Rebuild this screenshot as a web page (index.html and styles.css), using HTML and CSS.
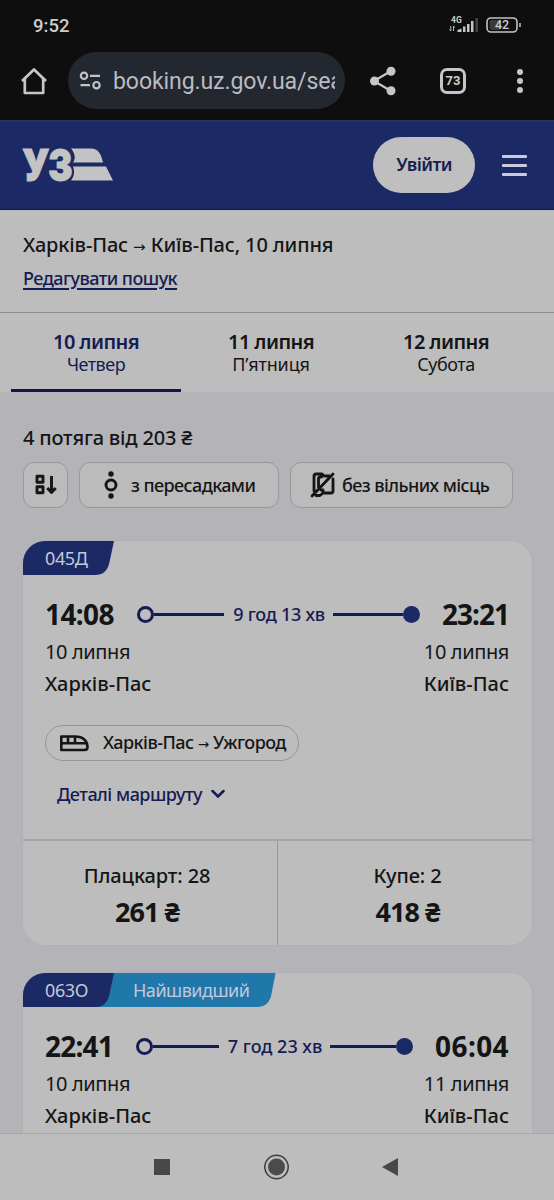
FILE: index.html
```
<!DOCTYPE html>
<html lang="uk">
<head>
<meta charset="utf-8">
<title>Квитки</title>
<link rel="stylesheet" href="styles.css">
</head>
<body>
<div class="phone">
  <div class="status">
    <span class="clock">9:52</span>
    <svg class="signal" width="31" height="20" viewBox="0 0 31 20">
      <text x="2" y="8" class="net">4G</text>
      <path d="M1.800 11v5M.5 14.500l1.300 1.500M4.500 16v-5l1.300 1.500" stroke="#bbb" fill="none"/>
      <path d="M8.500 17v-2l4-1.500v3.500zM14 17v-5.500h2.500v5.500zM18 17v-8h2.500v8zM22 17V6h2.500v11z" fill="#c4c4c4"/>
      <path d="M26.500 3h2.500v14h-2.500z" fill="#444"/>
    </svg>
    <svg class="battery" width="36" height="17" viewBox="0 0 36 17">
      <rect x="1" y="1" width="30" height="14" rx="4" fill="none" stroke="#c4c4c4" stroke-width="1.600"/>
      <rect x="3.500" y="3" width="11" height="10" rx="2" fill="#3a3a3a"/>
      <path d="M34 6v4" stroke="#c4c4c4" stroke-width="1.500"/>
      <text x="16" y="12.400" text-anchor="middle" class="level">42</text>
    </svg>
  </div>
  <div class="browser">
    <svg class="home" width="28" height="28" viewBox="0 0 28 28" fill="none" stroke="#c6c6c6" stroke-width="2.700" stroke-linejoin="round"><path d="M2 14L14 2.500 26 14M4.800 12v14h18.400V12"/></svg>
    <div class="address">
      <svg width="24" height="20" viewBox="0 0 24 20" fill="none" stroke="#c0c3c7" stroke-width="2.200"><circle cx="5" cy="4.800" r="3.200"/><circle cx="17.500" cy="14.200" r="3.200"/><path d="M11 4.800h10M1.500 14.200h9.500"/></svg>
      <span class="url">booking.uz.gov.ua/sea</span>
    </div>
    <svg class="share" width="28" height="30" viewBox="0 0 28 30" fill="#c6c6c6"><path d="M5 15L22 5M5 15l17 10" stroke="#c6c6c6" stroke-width="2.200"/><circle cx="5.500" cy="15" r="4.500"/><circle cx="22" cy="5.300" r="4.500"/><circle cx="22" cy="24.700" r="4.500"/></svg>
    <span class="tabcount">73</span>
    <span class="more"><i></i><i></i><i></i></span>
  </div>
  <header class="site">
    <svg class="logo" width="92" height="60" viewBox="0 -12 92 60" fill="#c3c3c3">
      <text class="mark" x="0" y="33.500" textLength="49" lengthAdjust="spacingAndGlyphs">УЗ</text>
      <path d="M49 1.500h20c7 0 10 5 12 14H51c3-4 2-9-2-14zM51 19.500h33l7 14H49c3-4 4-8 2-14z"/>
    </svg>
    <span class="login">Увійти</span>
    <span class="burger"><i></i><i></i><i></i></span>
  </header>
  <section class="route">
    <div class="title">Харків-Пас <span class="arr">→</span> Київ-Пас, 10 липня</div>
    <a class="edit">Редагувати пошук</a>
  </section>
  <nav class="days">
    <div class="day active"><b>10 липня</b><span>Четвер</span></div>
    <div class="day"><b>11 липня</b><span class="wide">П’ятниця</span></div>
    <div class="day"><b>12 липня</b><span>Субота</span></div>
  </nav>
  <main class="results">
    <div class="count">4 потяга від 203 ₴</div>
    <div class="filters">
      <span class="chip sort"><svg width="22" height="22" viewBox="0 0 22 22" fill="none" stroke="#151515" stroke-width="2.900" stroke-linejoin="round"><rect x="2" y="2.300" width="6" height="6"/><rect x="2" y="12.800" width="6" height="6"/><path d="M16.500 2v16M12.300 14l4.200 4.500 4.200-4.500"/></svg></span>
      <span class="chip transfer"><svg width="14" height="28" viewBox="0 0 14 28"><circle cx="7" cy="3" r="2.700" fill="#151515"/><circle cx="7" cy="14" r="5" fill="none" stroke="#151515" stroke-width="2.900"/><circle cx="7" cy="25" r="2.700" fill="#151515"/></svg><span>з пересадками</span></span>
      <span class="chip seats"><svg width="26" height="26" viewBox="0 0 26 26" fill="none" stroke="#151515" stroke-width="2.800" stroke-linecap="round" stroke-linejoin="round"><path d="M4 19V4q0-2 2-2h6l2 2h5M8.500 15V6.500q0-1.500 2-1.500h1M23 7v12q0 2-2 2h-8l-3 2.500H6M13 21v-3h-2M2 24L23 2"/></svg><span>без вільних місць</span></span>
    </div>
    <article class="card">
      <div class="tags"><svg width="92" height="34" viewBox="0 0 92 34"><path d="M0 34V22A22 22 0 0 1 22 0H91L86.500 21Q84 34 72 34z" fill="#1b2965"/></svg><span class="num">045Д</span></div>
      <div class="body">
        <div class="times"><b class="dep">14:08</b><span class="track"><i class="ring"></i><i class="line"></i><em>9 год 13 хв</em><i class="line"></i><i class="dot"></i></span><b class="arrv">23:21</b></div>
        <div class="ends date"><span>10 липня</span><span>10 липня</span></div>
        <div class="ends station"><span>Харків-Пас</span><span>Київ-Пас</span></div>
        <div class="train"><svg width="29" height="17" viewBox="0 0 29 17" fill="none" stroke="#151515" stroke-width="2.600" stroke-linejoin="round"><path d="M1.300 1.500h14C23 1.500 27.500 6 27.500 12q0 3-3 3H1.300zM1.300 8.300h24M8 2v6M15 2v6"/></svg><span>Харків-Пас <span class="arr">→</span> Ужгород</span></div>
        <div class="details"><span>Деталі маршруту</span><svg width="14" height="10" viewBox="0 0 14 10" fill="none" stroke="#151b54" stroke-width="2.500" stroke-linecap="round"><path d="M1.500 2L7 7.500 12.500 2"/></svg></div>
      </div>
      <div class="classes">
        <div><span class="cls">Плацкарт: 28</span><b>261 ₴</b></div>
        <div><span class="cls kupe">Купе: 2</span><b>418 ₴</b></div>
      </div>
    </article>
    <article class="card second">
      <div class="tags"><svg width="254" height="34" viewBox="0 0 254 34"><path d="M70 0H252.500L248.500 21Q246 34 234 34H60z" fill="#2077aa"/><path d="M0 34V22A22 22 0 0 1 22 0H91L86.500 21Q84 34 72 34H0z" fill="#1b2965"/></svg><span class="num">063О</span><span class="fast">Найшвидший</span></div>
      <div class="body">
        <div class="times"><b class="dep">22:41</b><span class="track"><i class="ring"></i><i class="line"></i><em>7 год 23 хв</em><i class="line"></i><i class="dot"></i></span><b class="arrv">06:04</b></div>
        <div class="ends date"><span>10 липня</span><span>11 липня</span></div>
        <div class="ends station"><span>Харків-Пас</span><span>Київ-Пас</span></div>
      </div>
    </article>
  </main>
  <footer class="system">
    <svg width="554" height="66" viewBox="0 0 554 66"><rect x="154" y="25" width="16" height="16" fill="#484848"/><circle cx="276.500" cy="33" r="11.700" fill="none" stroke="#3e3e3e" stroke-width="1.500"/><circle cx="276.500" cy="33" r="8.500" fill="#4b4b4b"/><path d="M382 33l16-9v18z" fill="#484848"/></svg>
  </footer>
</div>
</body>
</html>
```
FILE: styles.css
```
* { box-sizing: border-box; }
body { margin: 0; background: #b4b4b8; }
.phone { width: 554px; height: 1200px; display: flex; flex-direction: column; overflow: hidden; font-family: "Noto Sans", sans-serif; font-size: 18px; color: #151515; white-space: nowrap; }
.status { flex: none; height: 50px; padding: 0 32px 0 33px; background: #0e0e0e; display: flex; align-items: center; }
.clock { font: 500 18.500px/50px Roboto, sans-serif; color: #cdcdcd; margin-right: auto; padding-top: 2px; }
.net { font: 700 8.500px Roboto, sans-serif; fill: #ccc; }
.signal { margin-right: 6px; }
.battery { margin-top: 1px; }
.level { font: 500 12.500px Roboto, sans-serif; fill: #ccc; }
.browser { flex: none; height: 70px; padding: 2px 28px 11px 20px; background: #0e0e0e; display: flex; align-items: center; }
.home { margin-right: 20px; }
.address { width: 277px; height: 57px; border-radius: 29px; background: #23272f; padding: 0 10px 0 11px; display: flex; align-items: center; gap: 10px; }
.address svg { flex: none; }
.url { flex: 1; overflow: hidden; font: 400 23.100px/57px Roboto, sans-serif; letter-spacing: -.12px; color: #b9bcc0; padding-top: 1px; }
.share { margin-left: 24px; }
.tabcount { margin-left: 43px; width: 26px; height: 26px; border: 3px solid #c6c6c6; border-radius: 7px; font: 700 13px/20px Roboto, sans-serif; text-align: center; color: #ccc; }
.more { margin-left: auto; width: 12px; display: flex; flex-direction: column; align-items: center; gap: 3px; }
.more i { width: 6px; height: 6px; border-radius: 50%; background: #c6c6c6; }
.site { flex: none; height: 90px; padding: 0 27px 1px 22px; background: #1b2964; border-top: 2px solid #2a3056; border-bottom: 1px solid #0d1446; display: flex; align-items: center; }
.mark { font: 900 44px Inter, sans-serif; letter-spacing: -2px; stroke: #c3c3c3; stroke-width: .8px; }
.login { margin-left: auto; width: 102px; height: 56px; border-radius: 28px; background: #bfbfc0; color: #171c50; font-weight: 600; font-size: 18px; line-height: 54px; text-align: center; letter-spacing: -.6px; }
.burger { width: 25px; margin-left: 27px; display: flex; flex-direction: column; gap: 6px; }
.burger i { height: 3px; background: #c9cbdc; border-radius: 1px; }
.route { flex: none; height: 103px; padding: 18px 23px 0; background: #bdbdbd; border-bottom: 1px solid #8e8e8e; display: flex; flex-direction: column; align-items: flex-start; }
.title { font-size: 20px; font-weight: 500; line-height: 34px; letter-spacing: -.14px; }
.arr { font-family: "DejaVu Sans", sans-serif; font-size: .75em; letter-spacing: 0; }
.edit { font-size: 18px; font-weight: 500; line-height: 28px; letter-spacing: -.53px; color: #151b54; text-decoration: underline; text-decoration-thickness: 1.500px; text-underline-offset: 3px; }
.days { flex: none; height: 79px; padding: 0 11px; background: #bdbdbd; display: flex; gap: 5px; }
.day { width: 170px; padding-top: 17px; display: flex; flex-direction: column; align-items: center; }
.day b { font-size: 20px; font-weight: 600; line-height: 24px; letter-spacing: -.6px; }
.day span { font-size: 18px; line-height: 21px; letter-spacing: -.5px; }
.day .wide { letter-spacing: -.15px; }
.active { color: #151b54; border-bottom: 3px solid #12174c; }
.results { flex: 1; min-height: 0; overflow: hidden; padding: 30px 22px 0 23px; }
.count { font-size: 20px; font-weight: 500; line-height: 32px; letter-spacing: -.2px; }
.filters { display: flex; gap: 11px; margin-top: 8px; }
.chip { height: 46px; border: 1px solid #98989b; border-radius: 11px; background: #bbbbbc; display: flex; align-items: center; font-size: 18px; font-weight: 500; letter-spacing: -.58px; line-height: 44px; padding-bottom: 1px; }
.sort { width: 45px; padding-left: 11px; }
.transfer { width: 200px; padding-left: 24px; gap: 13px; }
.seats { width: 223px; padding-left: 19px; gap: 6px; }
.card { margin-top: 33px; height: 404px; border-radius: 22px; background: #bdbdbd; box-shadow: 0 0 2px #aaaab0; display: flex; flex-direction: column; }
.card.second { margin-top: 28px; }
.tags { position: relative; height: 34px; font-size: 18px; line-height: 34px; color: #c3c8da; }
.tags svg { display: block; }
.num { position: absolute; left: 22px; top: 0; letter-spacing: -.4px; }
.fast { position: absolute; left: 110px; top: 0; letter-spacing: -.5px; }
.body { flex: 1; padding: 20px 23px 0 22px; }
.times { display: flex; justify-content: space-between; align-items: center; height: 38px; }
.times b { font-size: 28px; font-weight: 700; line-height: 38px; letter-spacing: -.6px; }
.times .arrv { letter-spacing: -1px; }
.second .times .arrv { letter-spacing: .4px; }
.second .times .dep { letter-spacing: -.8px; }
.track { flex: 1; margin: 0 22px 0 23px; display: flex; align-items: center; color: #151b54; }
.track em { font-style: normal; font-size: 18px; font-weight: 500; letter-spacing: -.25px; margin: 0 8px 0 9px; }
.second .track em { letter-spacing: 0; }
.ring { width: 17px; height: 17px; border: 3px solid #151b54; border-radius: 50%; }
.dot { width: 17px; height: 17px; background: #1b2965; border-radius: 50%; }
.line { flex: 1; height: 3px; background: #151b54; }
.ends { display: flex; justify-content: space-between; font-size: 20px; line-height: 32px; letter-spacing: -.38px; }
.date { margin-top: 3px; }
.station { font-weight: 500; letter-spacing: 0; }
.train { margin-top: 25px; width: 254px; height: 36px; border: 1px solid #969696; border-radius: 18px; padding-left: 14px; display: flex; align-items: center; gap: 14px; font-size: 18px; font-weight: 500; line-height: 34px; letter-spacing: -.53px; }
.details { margin: 17px 0 0 12px; height: 32px; display: flex; align-items: center; gap: 9px; font-size: 18px; font-weight: 500; letter-spacing: -.5px; color: #151b54; }
.classes { height: 106px; border-top: 2px solid #a6a6a6; display: flex; }
.classes div { flex: none; width: 254px; padding: 19px 6px 0 0; display: flex; flex-direction: column; align-items: center; }
.classes div + div { flex: 1; border-left: 1px solid #969696; padding: 19px 0 0 5px; }
.cls { font-size: 20px; font-weight: 500; line-height: 32px; letter-spacing: -.1px; }
.classes b { font-size: 27px; font-weight: 700; line-height: 40px; letter-spacing: -1px; }
.system { flex: none; height: 67px; background: #bdbdbd; border-top: 1px solid #a9a9a9; }
.system svg { display: block; }
```
